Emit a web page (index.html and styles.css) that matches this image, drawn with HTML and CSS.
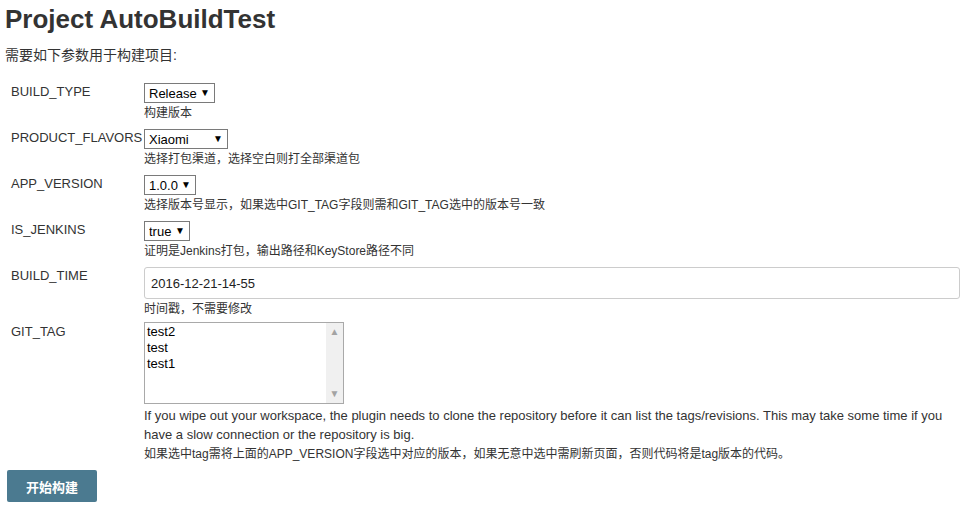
FILE: index.html
```html
<!DOCTYPE html>
<html lang="zh-CN">

<head>
    <meta charset="UTF-8">
    <meta name="viewport" content="width=device-width, initial-scale=1.0">
    <title>Project AutoBuildTest</title>
    <link rel="stylesheet" href="styles.css">
</head>

<body>

    <h1 class="title">Project AutoBuildTest</h1>
    <p class="intro">需要如下参数用于构建项目:</p>

    <form class="params" onsubmit="event.preventDefault()">

        <div class="param">
            <div class="param-name">BUILD_TYPE</div>
            <div class="param-value">
                <span class="select-wrap">
                    <select class="select">
                        <option>Release</option>
                        <option>Debug</option>
                    </select>
                </span>
                <div class="param-desc">构建版本</div>
            </div>
        </div>

        <div class="param">
            <div class="param-name">PRODUCT_FLAVORS</div>
            <div class="param-value">
                <span class="select-wrap">
                    <select class="select select-wide">
                        <option>Xiaomi</option>
                        <option></option>
                    </select>
                </span>
                <div class="param-desc">选择打包渠道，选择空白则打全部渠道包</div>
            </div>
        </div>

        <div class="param">
            <div class="param-name">APP_VERSION</div>
            <div class="param-value">
                <span class="select-wrap">
                    <select class="select">
                        <option>1.0.0</option>
                    </select>
                </span>
                <div class="param-desc">选择版本号显示，如果选中GIT_TAG字段则需和GIT_TAG选中的版本号一致</div>
            </div>
        </div>

        <div class="param">
            <div class="param-name">IS_JENKINS</div>
            <div class="param-value">
                <span class="select-wrap">
                    <select class="select">
                        <option>true</option>
                    </select>
                </span>
                <div class="param-desc">证明是Jenkins打包，输出路径和KeyStore路径不同</div>
            </div>
        </div>

        <div class="param param-text">
            <div class="param-name">BUILD_TIME</div>
            <div class="param-value">
                <input type="text" class="text-input" value="2016-12-21-14-55">
                <div class="param-desc">时间戳，不需要修改</div>
            </div>
        </div>

        <div class="param param-list">
            <div class="param-name">GIT_TAG</div>
            <div class="param-value">
                <div class="listbox">
                    <ul class="listbox-items">
                        <li>test2</li>
                        <li>test</li>
                        <li>test1</li>
                    </ul>
                    <div class="listbox-scroll">
                        <span class="scroll-arrow">&#9650;</span>
                        <span class="scroll-arrow">&#9660;</span>
                    </div>
                </div>
                <div class="param-desc param-help">If you wipe out your workspace, the plugin needs to clone the repository before it can list the tags/revisions. This may take some time if you have a slow connection or the repository is big.</div>
                <div class="param-desc param-help param-help-cn">如果选中tag需将上面的APP_VERSION字段选中对应的版本，如果无意中选中需刷新页面，否则代码将是tag版本的代码。</div>
            </div>
        </div>

        <button type="submit" class="build-btn">开始构建</button>
    </form>

</body>

</html>
```

FILE: styles.css
```css
body {
    margin: 0;
    padding: 0 7px 0 5px;
    background-color: #fff;
    color: #333;
    font-family: "Liberation Sans", Arial, "Noto Sans CJK SC", sans-serif;
    font-size: 13px;
}

.title {
    margin: 4px 0 0;
    font-size: 26px;
    line-height: 30px;
    font-weight: bold;
}

.intro {
    margin: 11px 0 0;
    font-size: 14px;
    line-height: 20px;
}

.params {
    margin-top: 18px;
}

.param {
    display: grid;
    grid-template-columns: 139px 1fr;
    margin-bottom: 8px;
}

.param-text {
    margin-bottom: 5px;
}

.param-list {
    margin-bottom: 0;
}

    .param-name {
        padding: 1px 0 0 6px;
        line-height: 16px;
        white-space: nowrap;
    }

    .param-list .param-name {
        padding-top: 2px;
    }

    .param-value {
        display: flex;
        flex-direction: column;
        align-items: flex-start;
    }

    .param-desc {
        margin-top: 2px;
        font-size: 12px;
        line-height: 16px;
    }

    .param-help {
        margin-top: 2px;
        font-size: 13px;
        line-height: 19px;
    }

    .param-help-cn {
        margin-top: 1px;
        font-size: 12px;
    }

/* select boxes */
.select-wrap {
    position: relative;
    display: inline-block;
}

    .select-wrap::after {
        content: "\25BC";
        position: absolute;
        right: 5px;
        top: 4px;
        font-size: 10px;
        line-height: 11px;
        color: #000;
        pointer-events: none;
    }

.select {
    appearance: none;
    -webkit-appearance: none;
    height: 20px;
    margin: 0;
    padding: 0 17px 0 4px;
    border: 1px solid #7a7a7a;
    border-radius: 0;
    background: #fff;
    color: #000;
    font-family: inherit;
    font-size: 13px;
}

.select-wide {
    width: 84px;
}

.text-input {
    box-sizing: border-box;
    width: 100%;
    height: 32px;
    margin: 0;
    padding: 0 6px;
    border: 1px solid #ccc;
    border-radius: 3px;
    color: #222;
    font-family: inherit;
    font-size: 13px;
}

/* multi select list */
.listbox {
    display: flex;
    box-sizing: border-box;
    width: 200px;
    height: 82px;
    border: 1px solid #a9a9a9;
    background-color: #fff;
}

.listbox-items {
    flex: 1;
    margin: 0;
    padding: 1px 2px;
    list-style: none;
    color: #000;
    font-size: 13px;
    line-height: 16px;
}

.listbox-scroll {
    display: flex;
    flex-direction: column;
    justify-content: space-between;
    align-items: center;
    width: 17px;
    padding: 3px 0;
    background-color: #f0f0f0;
}

    .scroll-arrow {
        color: #a3a3a3;
        font-size: 10px;
        line-height: 12px;
    }

.build-btn {
    width: 90px;
    height: 32px;
    margin: 6px 0 0 2px;
    padding: 0;
    border: none;
    border-radius: 2px;
    background-color: #4b7a90;
    color: #fff;
    font-family: inherit;
    font-size: 13px;
    font-weight: bold;
    cursor: pointer;
}

    .build-btn:hover {
        background-color: #3e6679;
    }
```
